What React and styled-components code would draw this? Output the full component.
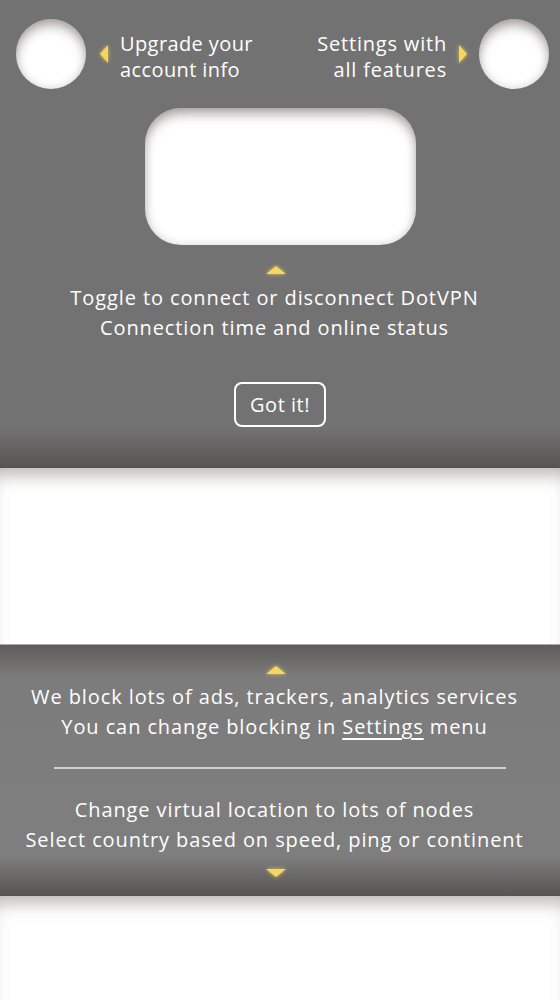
import React from 'react';
import styled, { createGlobalStyle } from 'styled-components';

const GlobalStyle = createGlobalStyle`
  html, body { margin: 0; padding: 0; background: #fff; }
  body { font-family: "Open Sans", "Liberation Sans", sans-serif; }
`;

const Page = styled.div`
  width: 560px;
  height: 1000px;
  display: flex;
  flex-direction: column;
  overflow: hidden;
`;

const Overlay = styled.section`
  background: linear-gradient(
    to bottom,
    ${p => p.$topShade ? '#5f5b5a 0px, #7c7c7c 32px,' : '#727272 0px,'}
    ${p => p.$base} calc(100% - 40px),
    #575352 100%
  );
  color: #fff;
  display: flex;
  flex-direction: column;
  align-items: center;
  height: ${p => p.$height}px;
  box-sizing: border-box;
  padding-top: ${p => p.$pt}px;
`;

const HeaderRow = styled.div`
  width: 100%;
  box-sizing: border-box;
  padding: 0 11px 0 16px;
  display: grid;
  grid-template-columns: 70px 1fr 1fr 70px;
  align-items: center;
`;

const Hole = styled.div`
  width: ${p => p.$w}px;
  height: ${p => p.$h}px;
  border-radius: ${p => p.$r};
  background: #fff;
  box-shadow: inset 0 8px 12px -2px rgba(110, 100, 100, 0.55),
    inset 0 0 8px rgba(110, 100, 100, 0.25);
`;

const Hint = styled.div`
  display: flex;
  align-items: center;
  gap: 12px;
  justify-content: ${p => p.$right ? 'flex-end' : 'flex-start'};
  padding: ${p => p.$right ? '0 12px 0 0' : '0 0 0 14px'};
`;

const HintText = styled.p`
  margin: 6px 0 0;
  font-size: 20px;
  line-height: 26px;
  letter-spacing: ${p => p.$align === 'right' ? '0.8px' : '0.4px'};
  text-align: ${p => p.$align || 'left'};
`;

const Glow = styled.svg`
  display: block;
  filter: drop-shadow(0 0 2px rgba(255, 220, 80, 0.8));
`;

const Pointer = styled.div`
  margin-top: ${p => p.$mt || 0}px;
  padding-right: 8px;
`;

const Arrow = ({ dir }) => {
  if (dir === 'left') return (
    <Glow width="8" height="18" viewBox="0 0 8 18"><polygon points="8,0 8,18 0,9" fill="#f6d561" /></Glow>
  );
  if (dir === 'right') return (
    <Glow width="8" height="18" viewBox="0 0 8 18"><polygon points="0,0 0,18 8,9" fill="#f6d561" /></Glow>
  );
  if (dir === 'down') return (
    <Glow width="20" height="8" viewBox="0 0 20 8"><polygon points="0,0 20,0 10,8" fill="#f6d561" /></Glow>
  );
  return (
    <Glow width="20" height="8" viewBox="0 0 20 8"><polygon points="0,8 20,8 10,0" fill="#f6d561" /></Glow>
  );
};

const Lines = styled.p`
  margin: ${p => p.$m || '0'};
  padding-right: 11px;
  font-size: 20px;
  line-height: 30px;
  letter-spacing: 0.9px;
  text-align: center;
`;

const Link = styled.span`
  text-decoration: underline;
  text-underline-offset: 4px;
`;

const Button = styled.button`
  margin-top: 39px;
  width: 92px;
  height: 45px;
  border: 2px solid #fff;
  border-radius: 8px;
  background: transparent;
  color: #fff;
  font-family: inherit;
  font-size: 20px;
  letter-spacing: 0.5px;
  padding: 0;
`;

const Divider = styled.hr`
  width: 452px;
  border: none;
  border-top: 2px solid #d2d2d2;
  margin: 25px 0 26px;
`;

const Blank = styled.div`
  background: #fff;
  height: ${p => p.$height ? `${p.$height}px` : 'auto'};
  flex: ${p => p.$height ? 'none' : 1};
  box-shadow: inset 0 16px 16px -8px rgba(130, 120, 118, 0.5);
  border-bottom: ${p => p.$edge ? '1px solid #aaa' : 'none'};
`;

export default function App() {
  return (
    <Page>
      <GlobalStyle />
      <Overlay $height={468} $pt={19} $base="#727272">
        <HeaderRow>
          <Hole $w={70} $h={70} $r="50%" />
          <Hint>
            <Arrow dir="left" />
            <HintText>Upgrade your<br />account info</HintText>
          </Hint>
          <Hint $right>
            <HintText $align="right">Settings with<br />all features</HintText>
            <Arrow dir="right" />
          </Hint>
          <Hole $w={70} $h={70} $r="50%" />
        </HeaderRow>
        <div style={{ marginTop: 19 }}>
          <Hole $w={271} $h={137} $r="36px" />
        </div>
        <Pointer $mt={21}><Arrow dir="up" /></Pointer>
        <Lines $m="9px 0 0">
          Toggle to connect or disconnect DotVPN<br />
          Connection time and online status
        </Lines>
        <Button>Got it!</Button>
      </Overlay>
      <Blank $height={176} $edge />
      <Overlay $height={251} $pt={21} $base="#7e7e7e" $topShade>
        <Pointer><Arrow dir="up" /></Pointer>
        <Lines $m="8px 0 0">
          We block lots of ads, trackers, analytics services<br />
          You can change blocking in <Link>Settings</Link> menu
        </Lines>
        <Divider />
        <Lines>
          Change virtual location to lots of nodes<br />
          Select country based on speed, ping or continent
        </Lines>
        <Pointer $mt={14}><Arrow dir="down" /></Pointer>
      </Overlay>
      <Blank />
    </Page>
  );
}
